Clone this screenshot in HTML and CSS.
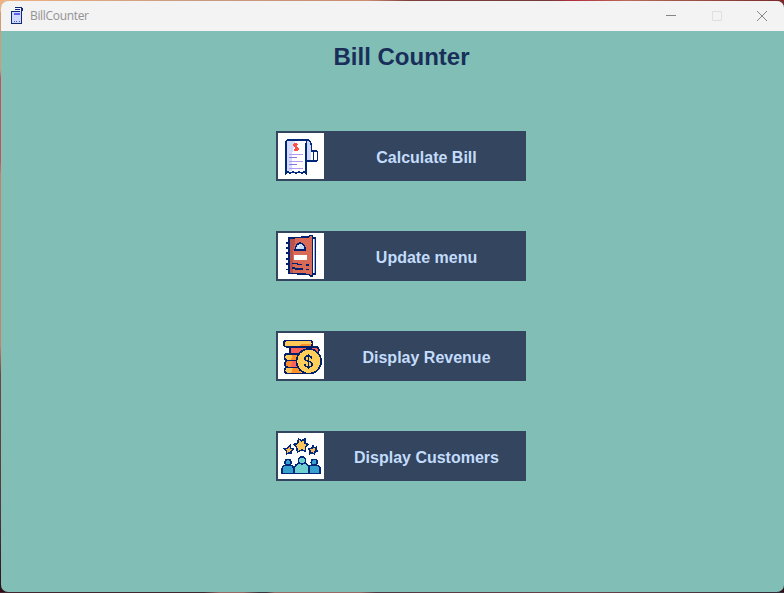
FILE: index.html
```html
<!DOCTYPE html>
<html lang="en">
<head>
<meta charset="utf-8">
<title>BillCounter</title>
<link rel="stylesheet" href="styles.css">
</head>
<body>
<div class="desktop">
<div class="window">
  <header class="titlebar">
    <svg class="app-icon" width="14" height="18" viewBox="0 0 14 18" shape-rendering="crispEdges">
      <path d="M5 1h7v1h1v2h-1v1h-2v1H9V3H5z" fill="#f3f6ff"/>
      <path d="M5 0h7v1h1v3h-1v1h-2V4h1V1H5zM5 2h5v1H5z" fill="#102a7a"/>
      <path d="M1 4h10v13H1z" fill="#cfd9ff"/>
      <path d="M1 4h9v1H1zM1 4h1v13H1zM11 5h1v11h-1zM1 16h11v1H1z" fill="#102a7a"/>
      <path d="M4 6h6v2H4z" fill="#625cf0"/>
      <path d="M4 14h1v1H4zM6 14h1v1H6zM9 14h1v1H9z" fill="#4c5cba"/>
    </svg>
    <span class="app-name">BillCounter</span>
    <div class="controls">
      <span class="control"><svg width="12" height="12" viewBox="0 0 12 12"><path d="M1 5.5h10" stroke="#858585"/></svg></span>
      <span class="control"><svg width="12" height="12" viewBox="0 0 12 12"><rect x="1.5" y="1.5" width="9" height="9" rx=".5" fill="none" stroke="#dedede"/></svg></span>
      <span class="control"><svg width="12" height="12" viewBox="0 0 12 12"><path d="M1 1l10 10M11 1L1 11" stroke="#858585"/></svg></span>
    </div>
  </header>
  <main class="content">
    <h1>Bill Counter</h1>
    <nav class="menu">
      <button class="menu-button">
        <svg class="icon" viewBox="0 0 46 46">
          <path d="M28 6.8q5 0 5.2 5V28h-4.7z" fill="#cdd8fc" stroke="#002878" stroke-width="1.4"/>
          <path d="M7.8 40.5V9.5Q8 6.8 11 6.8h19q-2 1-2 4v29.7l-1.5-2-2.5 2-3-2-3 2-3-2-3 2-2.5-2z" fill="#fff" stroke="#002878" stroke-width="1.5"/>
          <path d="M8.7 38V10q.3-2.3 2.8-2.3H17L13.5 24v14z" fill="#d3dcfd"/>
          <path d="M33.2 17.8h4q2.3 0 2.3 2V26q0 2-2.3 2h-4" fill="#fff" stroke="#002878" stroke-width="1.5"/>
          <path d="M33.2 28.2h-4.5M35.5 18v8q0 2-2.3 2" fill="none" stroke="#002878" stroke-width="1.3"/>
          <path d="M18 9.5v8.8M20 11.6q-4-2-4 .5 0 1.5 2 1.8t2 2q0 2.5-4 .7" fill="none" stroke="#fb5149" stroke-width="1.6"/>
          <path d="M11 21.5h14M11 28.5h14M11 35.5h14" stroke="#b39af5" stroke-width="1.1"/>
          <path d="M11 24.8h8M11 31.8h8" stroke="#8a78e2" stroke-width="1.2"/>
        </svg>
        <span class="label">Calculate Bill</span>
      </button>
      <button class="menu-button">
        <svg class="icon" viewBox="0 0 46 46">
          <path d="M32 5h5.7v36H32z" fill="#fff" stroke="#00206f" stroke-width="1.5"/>
          <path d="M36 6v34" stroke="#a3aed5"/>
          <path d="M10.8 5.2L31 3.7l1-1.2h2.5v40.2H32l-1-1.2-20.2-1.3z" fill="#d96a58" stroke="#00206f" stroke-width="1.6"/>
          <path d="M11.5 6h6L15 20v19.7l-3.5-.2z" fill="#b9534c"/>
          <path d="M8 9.6h3M8 14.6h3M8 19.6h3M8 25.6h3M8 30.6h3M8 36.5h3" stroke="#00206f" stroke-width="1.8"/>
          <path d="M17.5 16.5q.2-5 3.5-6l1.2-.7 1.3.7q3.5 1.4 3.5 6z" fill="#c5dcfa" stroke="#00206f" stroke-width="1.5"/>
          <path d="M16 17.2h12" stroke="#00206f" stroke-width="1.5"/>
          <path d="M20.5 15q0-2.5 1.5-3" fill="none" stroke="#fff" stroke-width="1.2"/>
          <path d="M16 22h13v5H16z" fill="#fff"/>
          <path d="M14 30.5h5l1 1h4M14 35.3h3l1 1h7M28 31.7h3M28 36.5h3" fill="none" stroke="#00206f" stroke-width="1.7"/>
        </svg>
        <span class="label">Update menu</span>
      </button>
      <button class="menu-button">
        <svg class="icon" viewBox="0 0 46 46">
          <rect x="6.5" y="34.3" width="25" height="6.3" rx="3" fill="#ffc65b"/>
          <rect x="7" y="27.5" width="24" height="6.8" rx="3" fill="#fb8a35"/>
          <rect x="6.5" y="20.8" width="25" height="6.7" rx="3" fill="#ffc957"/>
          <rect x="11.8" y="14" width="29" height="6.8" rx="3" fill="#fb5d57"/>
          <rect x="5.8" y="7.3" width="28.5" height="6.5" rx="3" fill="#ffc957"/>
          <path d="M22 13.5q1-3 4-3h7v3zM13 27l2-6h8v6zM13 40l2-5h8v5zM23 20.5l2-2h12v2z" fill="#fb9128"/>
          <path d="M13 34l1-6h8v6z" fill="#fb625c"/>
          <g stroke="#00206b" stroke-width="1.6" fill="none">
            <rect x="6.5" y="34.3" width="25" height="6.3" rx="3"/>
            <rect x="7" y="27.5" width="24" height="6.8" rx="3"/>
            <rect x="6.5" y="20.8" width="25" height="6.7" rx="3"/>
            <rect x="11.8" y="14" width="29" height="6.8" rx="3"/>
            <rect x="5.8" y="7.3" width="28.5" height="6.5" rx="3"/>
          </g>
          <circle cx="30.8" cy="28.3" r="12.3" fill="#ffce59" stroke="#00206b" stroke-width="1.7"/>
          <path d="M30.3 20.5v15.8M33.8 25.5q-.5-2.7-3.5-2.7-3.3 0-3.3 2.6 0 2.1 3.3 2.8 3.7.8 3.7 3.1 0 2.6-3.7 2.6-3.4 0-3.8-2.9" fill="none" stroke="#00206b" stroke-width="1.5"/>
        </svg>
        <span class="label">Display Revenue</span>
      </button>
      <button class="menu-button">
        <svg class="icon" viewBox="0 0 46 46" stroke="#00287c" stroke-width="1.5">
          <path d="M20.5 6l3 1.8L27 6v4l3 1.5-2.6 2.7V18l-4-1-3.8 2-1-4.5-3-3 4-1z" fill="#ffc65b"/>
          <path d="M12.5 12.3v3l2.5.7-1.8 2v2.3l-2.2-.7-2.3 1.4-.5-3L6.5 16l2.5-.7 1-.8z" fill="#ffb957"/>
          <path d="M35 12.3v2.4l3-.4-.4 2.4 1.8 1.2-2.4 1-.7 2.1-2.2-1-2.2.8v-3.3L31 16l2.8-.7z" fill="#ffb957"/>
          <path d="M3.8 40.3V37q.2-5.3 6.1-5.3T16 37v3.3z" fill="#36a1cc"/>
          <circle cx="10" cy="29.3" r="3" fill="#36a1cc"/>
          <path d="M30 40.3V37q.2-5.3 6.2-5.3t6 5.3v3.3z" fill="#36a1cc"/>
          <circle cx="36.2" cy="29.3" r="3" fill="#36a1cc"/>
          <path d="M16.3 40.3v-4.5q.5-5.8 7.6-5.8t7.2 5.8v4.5z" fill="#70d0d0"/>
          <circle cx="24" cy="27.3" r="3.6" fill="#70d0d0"/>
          <path d="M3 40.5h40"/>
        </svg>
        <span class="label">Display Customers</span>
      </button>
    </nav>
  </main>
</div>
</div>
</body>
</html>
```
FILE: styles.css
```css
* { box-sizing: border-box; }
body { margin: 0; }
.desktop {
  width: 784px;
  height: 593px;
  padding: 1px 0 1px 1px;
  overflow: hidden;
  background:
    linear-gradient(90deg, #efb183, #c99b80 25%, #cc8c70 47%, #7f3f3c 52%, #74393b 70%, #b52c3e 73%, #b86b58 80%, #7a2929) top / 100% 12px no-repeat,
    linear-gradient(90deg, #40262e 0 26%, #9a6865 28% 31%, #40323a 33% 34%, #9a6865 35% 46%, #503640 48%, #6a424b 75%, #302b35) bottom / 100% 1px no-repeat,
    linear-gradient(#d29a73 0 70px, #c4505e 78px 160px, #c98267 175px 345px, #704642 375px, #55363a 510px, #300c15);
}
.window {
  display: flex;
  flex-direction: column;
  height: 591px;
  border-radius: 7px;
  overflow: hidden;
  background: #80beb6;
}
.titlebar {
  display: flex;
  align-items: center;
  flex: 0 0 30px;
  padding-left: 9px;
  background: #f3f3f3;
  font: 12px/30px "Open Sans", "Noto Sans", sans-serif;
  color: #929292;
}
.app-icon { margin-right: 6px; }
.app-name { letter-spacing: -.33px; }
.controls { display: flex; margin: 0 -1px 0 auto; }
.control {
  display: grid;
  place-items: center;
  width: 45.5px;
  height: 30px;
}
.content {
  display: flex;
  flex-direction: column;
  align-items: center;
  padding: 12px 0 0 17px;
  font-family: "Liberation Sans", Arial, sans-serif;
}
h1 {
  margin: 0 0 60px;
  padding-left: 1px;
  font-size: 24px;
  line-height: 28px;
  color: #192f59;
}
.menu { display: grid; gap: 50px; }
.menu-button {
  display: flex;
  align-items: center;
  width: 250px;
  height: 50px;
  margin: 0;
  padding: 2px;
  border: 0;
  background: #34455f;
  color: #c3dcfb;
  font: bold 16px/20px "Liberation Sans", Arial, sans-serif;
}
.icon {
  flex: none;
  width: 46px;
  height: 46px;
  background: #fff;
  fill: none;
  shape-rendering: crispEdges;
}
.label { flex: 1; text-align: center; padding: 3px 0 0 5px; }
```
